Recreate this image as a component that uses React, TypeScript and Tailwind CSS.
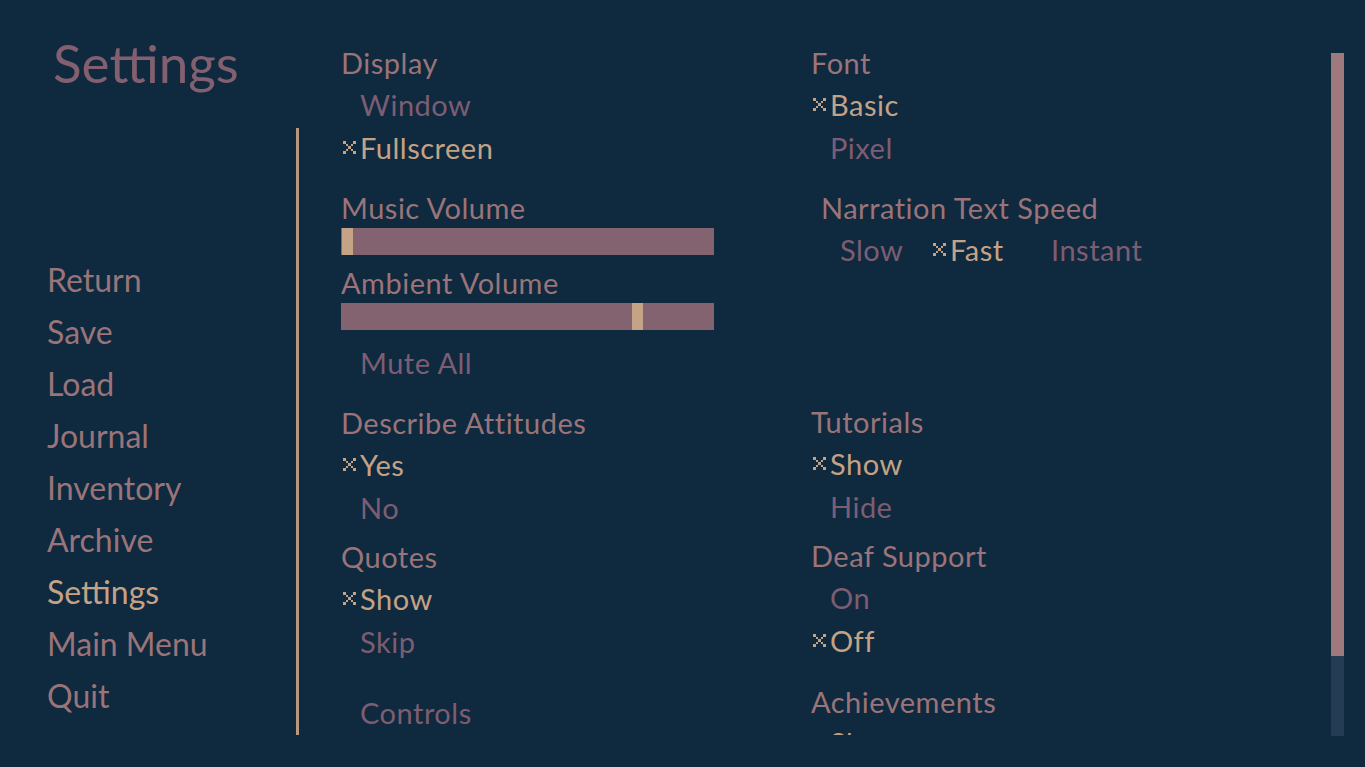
import React from 'react';

const FONT = { fontFamily: 'Lato, "Open Sans", sans-serif' };

const Mark: React.FC = () => (
  <svg width="13" height="13" viewBox="0 0 5 5" shapeRendering="crispEdges" className="shrink-0">
    {[
      [0, 0], [4, 0], [1, 1], [3, 1], [2, 2], [1, 3], [3, 3], [0, 4], [4, 4],
    ].map(([x, y]) => (
      <rect key={`${x}-${y}`} x={x} y={y} width="1" height="1" fill="#c4a285" />
    ))}
  </svg>
);

const Label: React.FC<{ text: string; className?: string }> = ({ text, className = '' }) => (
  <div className={`h-[40px] flex items-center text-[29px] tracking-[0.5px] text-[#9a7478] whitespace-nowrap ${className}`}>
    {text}
  </div>
);

const Option: React.FC<{ text: string; selected?: boolean; className?: string }> = ({ text, selected, className = '' }) => (
  <div className={`h-[43px] flex items-center whitespace-nowrap ${className}`}>
    <span className="w-[19px] flex items-center pl-[2px]">{selected && <Mark />}</span>
    <span className={`text-[29px] tracking-[0.5px] ${selected ? 'text-[#c4a285]' : 'text-[#7d5d72]'}`}>{text}</span>
  </div>
);

const Slider: React.FC<{ value: number }> = ({ value }) => (
  <div className="relative h-[27px] w-[373px] bg-[#82636f]">
    <div className="absolute top-0 h-[27px] w-[11px] bg-[#c4a386]" style={{ left: `${value * 362 + 1}px` }} />
  </div>
);

const menu = ['Return', 'Save', 'Load', 'Journal', 'Inventory', 'Archive', 'Settings', 'Main Menu', 'Quit'];

export default function App() {
  return (
    <div className="w-[1365px] h-[767px] bg-[#0f293f] flex overflow-hidden" style={FONT}>
      <aside className="w-[296px] shrink-0 flex flex-col">
        <h1 className="pl-[53px] pt-[29px] h-[68px] leading-[68px] text-[53px] text-[#82606f]">Settings</h1>
        <nav className="mt-auto mb-[45px] pl-[47px] flex flex-col">
          {menu.map((m) => (
            <div
              key={m}
              className={`h-[52px] flex items-center text-[32px] ${m === 'Settings' ? 'text-[#c5a286]' : 'text-[#9a7478]'}`}
            >
              {m}
            </div>
          ))}
        </nav>
      </aside>

      <div className="w-[3px] shrink-0 mt-[128px] h-[607px] bg-[#b8977f]" />

      <main className="ml-[42px] w-[990px] h-[735px] overflow-hidden pt-[43px] flex">
        <section className="w-[470px] shrink-0 flex flex-col">
          <Label text="Display" />
          <Option text="Window" />
          <Option text="Fullscreen" selected />

          <Label text="Music Volume" className="mt-[19px] h-[39px]" />
          <Slider value={0} />
          <Label text="Ambient Volume" className="mt-[8px] h-[39px]" />
          <Slider value={0.8} />
          <Option text="Mute All" className="mt-[11px]" />

          <Label text="Describe Attitudes" className="mt-[19px]" />
          <Option text="Yes" selected />
          <Option text="No" />

          <Label text="Quotes" className="mt-[8px]" />
          <Option text="Show" selected />
          <Option text="Skip" />

          <Option text="Controls" className="mt-[28px]" />
        </section>

        <section className="flex-1 flex flex-col">
          <Label text="Font" />
          <Option text="Basic" selected />
          <Option text="Pixel" />

          <Label text="Narration Text Speed" className="mt-[19px] pl-[10px]" />
          <div className="flex pl-[10px]">
            <Option text="Slow" className="w-[110px]" />
            <Option text="Fast" selected className="w-[101px]" />
            <Option text="Instant" />
          </div>

          <Label text="Tutorials" className="mt-[131px]" />
          <Option text="Show" selected />
          <Option text="Hide" />

          <Label text="Deaf Support" className="mt-[8px]" />
          <Option text="On" />
          <Option text="Off" selected />

          <Label text="Achievements" className="mt-[20px]" />
          <Option text="Show" selected className="-mt-[1px]" />
          <Option text="Hide" />
        </section>
      </main>

      <div className="ml-auto mr-[21px] mt-[53px] w-[13px] h-[683px] shrink-0 bg-[#253d54] flex flex-col">
        <div className="h-[603px] bg-[#9e7a7c]" />
      </div>
    </div>
  );
}
